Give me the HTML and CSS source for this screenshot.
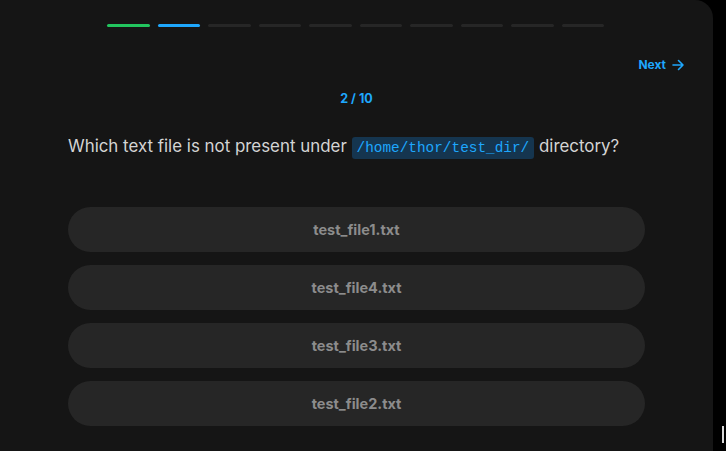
FILE: index.html
```html
<!DOCTYPE html>
<html>
<head>
<meta charset="utf-8">
<link rel="stylesheet" href="styles.css">
</head>
<body>
<div class="panel">
  <div class="progress">
    <span class="seg done"></span>
    <span class="seg current"></span>
    <span class="seg"></span>
    <span class="seg"></span>
    <span class="seg"></span>
    <span class="seg"></span>
    <span class="seg"></span>
    <span class="seg"></span>
    <span class="seg"></span>
    <span class="seg"></span>
  </div>
  <div class="nav">
    <a class="next">Next
      <svg width="14" height="14" viewBox="0 0 14 14" fill="none" stroke="currentColor" stroke-width="1.6" stroke-linecap="round" stroke-linejoin="round"><path d="M2 7h10M7.5 2.5L12 7l-4.5 4.5"/></svg>
    </a>
  </div>
  <div class="counter">2 / 10</div>
  <p class="question">Which text file is not present under <code class="code">/home/thor/test_dir/</code> directory?</p>
  <div class="options">
    <button class="option">test_file1.txt</button>
    <button class="option">test_file4.txt</button>
    <button class="option">test_file3.txt</button>
    <button class="option">test_file2.txt</button>
  </div>
</div>
<div class="caret"></div>
</body>
</html>
```
FILE: styles.css
```css
html, body {
  margin: 0;
  padding: 0;
  background: #000;
  height: 451px;
  overflow: hidden;
  font-family: Inter, "Noto Sans", sans-serif;
}
body {
  display: flex;
}
.panel {
  width: 713px;
  height: 451px;
  background: #151515;
  border-top-right-radius: 18px;
  box-sizing: border-box;
  padding: 24px 68px 0 68px;
}
.progress {
  display: flex;
  gap: 8px;
  margin: 0 41px 0 39px;
}
.seg {
  flex: 1;
  height: 3px;
  border-radius: 2px;
  background: #262626;
}
.seg.done { background: #22c55e; }
.seg.current { background: #1ea7fd; }
.nav {
  display: flex;
  justify-content: flex-end;
  margin-top: 31px;
  margin-right: -40px;
}
.next {
  display: flex;
  align-items: center;
  gap: 5px;
  color: #1ea7fd;
  font-weight: 700;
  font-size: 12px;
  line-height: 14px;
}
.counter {
  text-align: center;
  color: #1ea7fd;
  font-weight: 700;
  font-size: 12.5px;
  line-height: 14px;
  margin-top: 20px;
}
.question {
  margin: 28px 0 0 0;
  color: #d4d4d4;
  font-size: 16.9px;
  line-height: 24px;
}
.code {
  font-family: "Liberation Mono", "DejaVu Sans Mono", monospace;
  font-size: 14.4px;
  color: #1ea7fd;
  background: #15354f;
  border-radius: 3px;
  padding: 3px 5px;
}
.options {
  display: flex;
  flex-direction: column;
  gap: 13px;
  margin-top: 47px;
}
.option {
  height: 45px;
  border: none;
  border-radius: 23px;
  background: #262626;
  color: #8c8c8c;
  font-family: Inter, "Noto Sans", sans-serif;
  font-weight: 700;
  font-size: 14.5px;
}
.caret {
  position: absolute;
  left: 722px;
  top: 426px;
  width: 2px;
  height: 17px;
  background: #d8d8d8;
}
```
